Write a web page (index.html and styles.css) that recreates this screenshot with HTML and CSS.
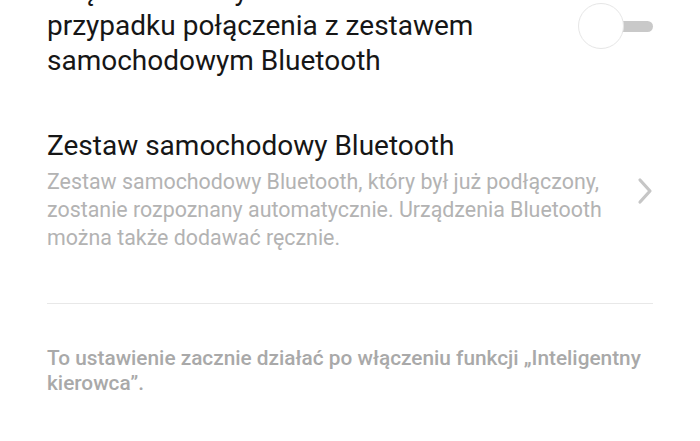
FILE: index.html
```html
<!DOCTYPE html>
<html lang="pl">
<head>
    <meta charset="UTF-8">
    <title>Tryb jazdy</title>
    <link rel="stylesheet" href="styles.css">
</head>
<body>
    <div class="settings">
        <div class="row row-switch">
            <div class="row-text">
                <div class="row-title multi">Włącz automatycznie w<br>przypadku połączenia z zestawem samochodowym Bluetooth</div>
            </div>
            <div class="switch">
                <span class="switch-track"></span>
                <span class="switch-knob"></span>
            </div>
        </div>

        <div class="row row-link">
            <div class="row-text">
                <div class="row-title">Zestaw samochodowy Bluetooth</div>
                <div class="row-desc">Zestaw samochodowy Bluetooth, który był już podłączony, zostanie rozpoznany automatycznie. Urządzenia Bluetooth można także dodawać ręcznie.</div>
            </div>
            <svg class="chevron" width="16" height="28" viewBox="0 0 16 28">
                <polyline points="3,3 13,14 3,25" fill="none" stroke="#c6c6c6" stroke-width="3.2" stroke-linecap="round" stroke-linejoin="round"/>
            </svg>
        </div>

        <div class="divider"></div>

        <p class="note">To ustawienie zacznie działać po włączeniu funkcji „Inteligentny kierowca”.</p>
    </div>
</body>
</html>
```

FILE: styles.css
```css
* {
    box-sizing: border-box;
}

body {
    margin: 0;
    background: #ffffff;
    font-family: Roboto, "Noto Sans", sans-serif;
    color: #161616;
    overflow: hidden;
}

.settings {
    padding: 0 47px;
    margin-top: -27px;
}

.row {
    display: flex;
    align-items: center;
    justify-content: space-between;
}

.row-text {
    flex: 1;
}

.row-title {
    font-size: 28px;
    line-height: 32px;
    color: #161616;
}

.row-title.multi {
    line-height: 35px;
    max-width: 480px;
}

/* toggle in the off position */
.switch {
    position: relative;
    width: 75px;
    height: 46px;
    flex-shrink: 0;
}

.switch-track {
    position: absolute;
    left: 30px;
    right: 0;
    top: 18px;
    height: 11px;
    border-radius: 6px;
    background: #c9c9c9;
}

.switch-knob {
    position: absolute;
    left: 0;
    top: 0;
    width: 46px;
    height: 46px;
    border-radius: 50%;
    background: #ffffff;
    border: 1.5px solid #e6e6e6;
}

.row-link {
    margin-top: 52px;
}

.row-desc {
    margin-top: 6px;
    font-size: 21.4px;
    line-height: 28px;
    color: #b3b3b3;
    max-width: 560px;
}

.chevron {
    flex-shrink: 0;
}

.divider {
    height: 1px;
    background: #e8e8e8;
    margin-top: 51px;
}

.note {
    margin: 42px 0 0;
    font-size: 20.8px;
    line-height: 25px;
    font-weight: 500;
    color: #a9a9a9;
}
```
